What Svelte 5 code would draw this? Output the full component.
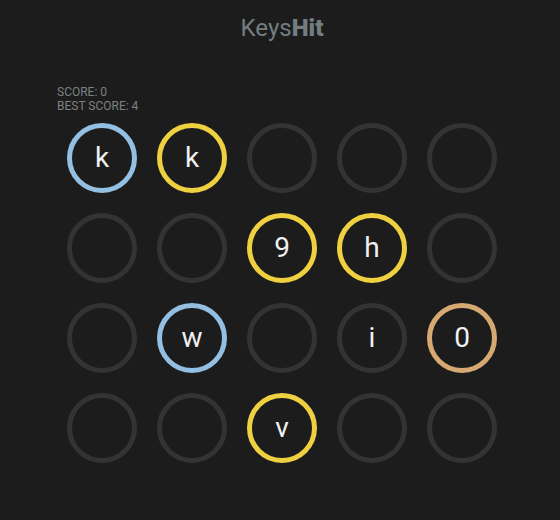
<script>
  const rows = [
    [{ key: 'k', tone: 'blue' }, { key: 'k', tone: 'yellow' }, {}, {}, {}],
    [{}, {}, { key: '9', tone: 'yellow' }, { key: 'h', tone: 'yellow' }, {}],
    [{}, { key: 'w', tone: 'blue' }, {}, { key: 'i' }, { key: '0', tone: 'orange' }],
    [{}, {}, { key: 'v', tone: 'yellow' }, {}, {}]
  ];
  const score = 0;
  const best = 4;
</script>

<main>
  <h1>Keys<strong>Hit</strong></h1>
  <section class="game">
    <div class="scores">
      <div>SCORE: {score}</div>
      <div>BEST SCORE: {best}</div>
    </div>
    <div class="board">
      {#each rows as row}
        <div class="row">
          {#each row as cell}
            <div class="cell {cell.tone ?? ''}">{cell.key ?? ''}</div>
          {/each}
        </div>
      {/each}
    </div>
  </section>
</main>

<style>
  :global(body) {
    background: #1c1c1c;
  }
  main {
    box-sizing: border-box;
    min-height: 100vh;
    padding: 12px 16px;
    display: flex;
    flex-direction: column;
    align-items: center;
    font-family: Roboto, sans-serif;
    color: #757c80;
  }
  h1 {
    margin: 0 0 41px;
    padding-left: 4px;
    font-size: 24px;
    line-height: 32px;
    font-weight: 400;
  }
  strong {
    font-weight: 900;
  }
  .game {
    padding-left: 4px;
  }
  .scores {
    font-size: 12px;
    line-height: 14px;
    color: #7c8183;
  }
  .board {
    padding: 10px;
    display: flex;
    flex-direction: column;
    gap: 20px;
  }
  .row {
    display: flex;
    gap: 20px;
  }
  .cell {
    box-sizing: border-box;
    width: 70px;
    height: 70px;
    border: 5px solid #333;
    border-radius: 50%;
    display: flex;
    align-items: center;
    justify-content: center;
    font-size: 28px;
    line-height: 32px;
    color: #f0f0f0;
  }
  .blue {
    border-color: #93c0e2;
  }
  .yellow {
    border-color: #eed040;
  }
  .orange {
    border-color: #d6a972;
  }
</style>
